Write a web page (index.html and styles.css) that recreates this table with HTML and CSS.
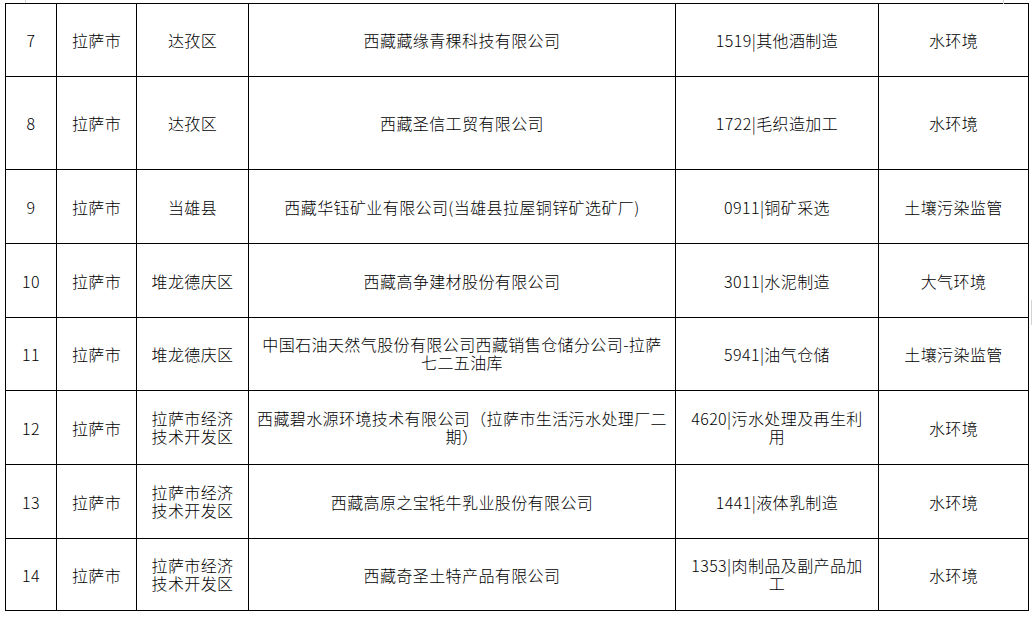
FILE: index.html
```html
<!DOCTYPE html>
<html lang="zh-CN">
<head>
<meta charset="utf-8">
<title>企业名单</title>
<link rel="stylesheet" href="styles.css">
</head>
<body>
<span class="mark mark-tl"></span>
<span class="mark mark-tr"></span>
<span class="mark mark-r"></span>
<table class="list">
  <colgroup>
    <col class="c-no"><col class="c-city"><col class="c-dist"><col class="c-name"><col class="c-ind"><col class="c-type">
  </colgroup>
  <tbody>
    <tr class="h73"><td>7</td><td>拉萨市</td><td>达孜区</td><td>西藏藏缘青稞科技有限公司</td><td>1519|其他酒制造</td><td>水环境</td></tr>
    <tr class="h93"><td>8</td><td>拉萨市</td><td>达孜区</td><td>西藏圣信工贸有限公司</td><td>1722|毛织造加工</td><td>水环境</td></tr>
    <tr class="h74"><td>9</td><td>拉萨市</td><td>当雄县</td><td>西藏华钰矿业有限公司(当雄县拉屋铜锌矿选矿厂)</td><td>0911|铜矿采选</td><td>土壤污染监管</td></tr>
    <tr class="h74"><td>10</td><td>拉萨市</td><td>堆龙德庆区</td><td>西藏高争建材股份有限公司</td><td>3011|水泥制造</td><td>大气环境</td></tr>
    <tr class="h73"><td>11</td><td>拉萨市</td><td>堆龙德庆区</td><td><span class="ln">中国石油天然气股份有限公司西藏销售仓储分公司-拉萨</span><span class="ln">七二五油库</span></td><td>5941|油气仓储</td><td>土壤污染监管</td></tr>
    <tr class="h74"><td>12</td><td>拉萨市</td><td><span class="ln">拉萨市经济</span><span class="ln">技术开发区</span></td><td><span class="ln">西藏碧水源环境技术有限公司（拉萨市生活污水处理厂二</span><span class="ln">期）</span></td><td><span class="ln">4620|污水处理及再生利</span><span class="ln">用</span></td><td>水环境</td></tr>
    <tr class="h74"><td>13</td><td>拉萨市</td><td><span class="ln">拉萨市经济</span><span class="ln">技术开发区</span></td><td>西藏高原之宝牦牛乳业股份有限公司</td><td>1441|液体乳制造</td><td>水环境</td></tr>
    <tr class="h72"><td>14</td><td>拉萨市</td><td><span class="ln">拉萨市经济</span><span class="ln">技术开发区</span></td><td>西藏奇圣土特产品有限公司</td><td><span class="ln">1353|肉制品及副产品加</span><span class="ln">工</span></td><td>水环境</td></tr>
  </tbody>
</table>
</body>
</html>
```

FILE: styles.css
```css
html, body {
  margin: 0;
  padding: 0;
  background: #ffffff;
}

body {
  position: relative;
  font-family: "Noto Sans CJK SC", "Liberation Sans", sans-serif;
  font-size: 16px;
  font-weight: 300;
  letter-spacing: 0.4px;
  color: #000000;
}

.list {
  margin: 3px 0 0 5px;
  width: 1023px;
  table-layout: fixed;
  border-collapse: collapse;
}

.c-no { width: 51px; }
.c-city { width: 80px; }
.c-dist { width: 112px; }
.c-name { width: 427px; }
.c-ind { width: 203px; }
.c-type { width: 150px; }

.list td {
  border: 1px solid #000000;
  padding: 0 2px;
  text-align: center;
  vertical-align: middle;
  line-height: 18px;
  white-space: nowrap;
}

.ln {
  display: block;
  height: 17.6px;
  line-height: 17.6px;
}

.h72 { height: 72px; }
.h73 { height: 73px; }
.h74 { height: 74px; }
.h93 { height: 93px; }

.mark {
  position: absolute;
  display: block;
  background: #d4d4d4;
}

.mark-tl {
  left: 25px;
  top: 0;
  width: 1px;
  height: 3px;
}

.mark-tr {
  left: 1003px;
  top: 0;
  width: 1px;
  height: 4px;
}

.mark-r {
  left: 1031px;
  top: 300px;
  width: 1px;
  height: 25px;
}
```
